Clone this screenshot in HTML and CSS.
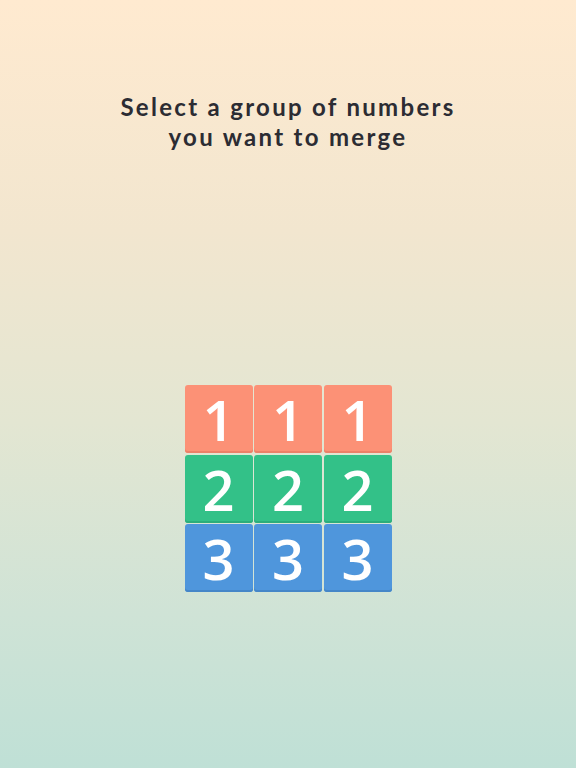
FILE: index.html
```html
<!DOCTYPE html>
<html>
<head>
  <meta name="viewport" content="width=device-width, initial-scale=1.0">
  <title>Merge</title>
  <link rel="stylesheet" href="styles.css">
</head>
<body>
  <div class="screen">
    <h1 class="hint">Select a group of numbers<br>you want to merge</h1>

    <div class="board">
      <div class="tile one">1</div>
      <div class="tile one">1</div>
      <div class="tile one">1</div>
      <div class="tile two">2</div>
      <div class="tile two">2</div>
      <div class="tile two">2</div>
      <div class="tile three">3</div>
      <div class="tile three">3</div>
      <div class="tile three">3</div>
    </div>
  </div>
</body>
</html>
```

FILE: styles.css
```css
html, body {
  margin: 0;
  padding: 0;
}
body {
  font-family: "Lato", "Open Sans", sans-serif;
}
.screen {
  width: 576px;
  height: 768px;
  display: flex;
  flex-direction: column;
  align-items: center;
  background: linear-gradient(to bottom, #ffead0 0%, #f2e6cf 30%, #e3e6d2 55%, #cfe3d6 80%, #bfe0d6 100%);
  overflow: hidden;
}
.hint {
  margin: 92px 0 0;
  color: #2c2c33;
  font-size: 24px;
  font-weight: 700;
  line-height: 30px;
  letter-spacing: 2.3px;
  text-align: center;
}
.board {
  margin-top: 233px;
  display: grid;
  grid-template-columns: repeat(3, 68px);
  grid-auto-rows: 68px;
  gap: 1.5px;
}
.tile {
  display: flex;
  align-items: center;
  justify-content: center;
  border-radius: 3px;
  color: #ffffff;
  font-family: "Open Sans", sans-serif;
  font-size: 56px;
  font-weight: 600;
  line-height: 1;
}
.one {
  background-color: #fc9176;
  box-shadow: inset 0 -2px 0 #ec8168;
}
.two {
  background-color: #33c188;
  box-shadow: inset 0 -2px 0 #2cae7a;
}
.three {
  background-color: #4f96dc;
  box-shadow: inset 0 -2px 0 #4586c8;
}
```
